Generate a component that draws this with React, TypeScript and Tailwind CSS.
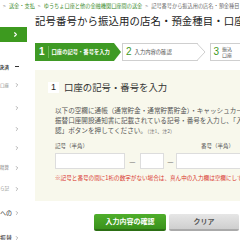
import { ChevronRight } from 'lucide-react';

const jp = { fontFamily: '"Noto Sans CJK JP", "Noto Sans", sans-serif' };

const sideItems = [
  { label: '口座', h: 'h-[24px]', dark: false },
  { label: '', h: 'h-[22px]', dark: false },
  { label: '', h: 'h-[19px]', dark: false },
  { label: '', h: 'h-[20px]', dark: false },
  { label: '精算', h: 'h-[19px]', dark: false },
  { label: 'ら記', h: 'h-[23px]', dark: false },
  { label: 'への', h: 'h-[26px]', dark: true },
  { label: '振替', h: 'h-[24px]', dark: true },
];

function Sidebar() {
  return (
    <div className="w-[27px] shrink-0 overflow-hidden">
      <div className="h-[15px]" />
      <div className="h-[15px] bg-[#3d9a1f] flex items-center justify-end pr-[8px]">
        <ChevronRight className="w-[7px] h-[7px] text-white" strokeWidth={4} />
      </div>
      <div className="h-[17px]" />
      <div className="h-[14px] flex items-center justify-between pr-[8px]">
        <span className="text-[5px] text-[#333] font-bold leading-none -ml-[1px]">決済</span>
        <span className="w-[4px] h-[1px] bg-[#333]" />
      </div>
      {sideItems.map((it, i) => (
        <div key={i} className={`${it.h} flex items-center justify-between pr-[7px]`}>
          <span className={`leading-none ${it.dark ? 'text-[6px] text-[#222]' : 'text-[4.5px] text-[#888]'}`}>{it.label}</span>
          <ChevronRight className="w-[6px] h-[6px] text-[#999]" strokeWidth={3} />
        </div>
      ))}
    </div>
  );
}

function Steps() {
  return (
    <div className="flex items-center h-[18px] mt-[17px]">
      <div className="relative h-[18px] w-[87px] bg-[#3f9a25] flex items-center">
        <span className="text-white text-[10px] font-bold pl-[4px] pr-[3px] leading-none border-r border-[#6cb555] h-[12px] flex items-center" style={{ fontFamily: 'Arial, "Liberation Sans", sans-serif' }}>1</span>
        <span className="text-white text-[5.3px] font-bold pl-[3px] leading-none whitespace-nowrap">口座の記号・番号を入力</span>
        <div className="absolute -right-[7px] top-0 w-0 h-0 border-y-[9px] border-y-transparent border-l-[7px] border-l-[#3f9a25]" />
      </div>
      <div className="relative h-[18px] w-[84px] ml-[8px] bg-white border border-[#cfcfcf] border-r-0 flex items-center">
        <span className="text-[#3f9a25] text-[10px] pl-[3px] pr-[3px] leading-none" style={{ fontFamily: 'Arial, "Liberation Sans", sans-serif' }}>2</span>
        <span className="text-[#555] text-[5.3px] leading-none whitespace-nowrap">入力内容の確認</span>
        <svg className="absolute -right-[8px] -top-[1px]" width="9" height="18" viewBox="0 0 9 18">
          <path d="M0 0.5 L8 9 L0 17.5" fill="white" stroke="#cfcfcf" strokeWidth="1" />
        </svg>
      </div>
      <div className="h-[18px] w-[40px] ml-[12px] bg-white border border-[#cfcfcf] flex items-center">
        <span className="text-[#3f9a25] text-[10px] pl-[2px] pr-[3px] leading-none" style={{ fontFamily: 'Arial, "Liberation Sans", sans-serif' }}>3</span>
        <span className="text-[#555] text-[5px] leading-[6px]">振込<br />口座</span>
      </div>
    </div>
  );
}

export default function App() {
  return (
    <div className="w-[240px] h-[240px] overflow-hidden bg-white" style={jp}>
      <div className="h-[12px] flex items-center whitespace-nowrap text-[5.2px] leading-none pl-[3px] overflow-hidden">
        <span className="text-[#888]">&gt;</span>
        <span className="text-[#3a8a2a] ml-[3px]">送金・支払</span>
        <span className="text-[#888] mx-[3px]">&gt;</span>
        <span className="text-[#3a8a2a]">ゆうちょ口座と他の金融機関口座間の送金</span>
        <span className="text-[#888] mx-[3px]">&gt;</span>
        <span className="text-[#666]">記号番号から振込用の店名・預金種目・口座番号を確認</span>
      </div>
      <div className="flex">
        <Sidebar />
        <div className="w-[220px] shrink-0 pl-[8px] overflow-hidden">
          <h1 className="text-[10.4px] leading-none text-[#222] whitespace-nowrap mt-[4px] tracking-[0.1px]">記号番号から振込用の店名・預金種目・口座番号を確認</h1>
          <Steps />
          <div className="mt-[9px] w-[220px] h-[131px] bg-[#f8f8ec] pl-[13px] pt-[12px]">
            <div className="flex items-center">
              <span className="w-[11px] h-[11px] bg-white flex items-center justify-center text-[9px] text-[#222] leading-none" style={{ fontFamily: 'Arial, "Liberation Sans", sans-serif' }}>1</span>
              <span className="ml-[5px] text-[9.4px] text-[#333] leading-none whitespace-nowrap">口座の記号・番号を入力</span>
            </div>
            <div className="mt-[12px] pl-[7px] text-[6.6px] leading-[10px] text-[#555] whitespace-nowrap">
              <p>以下の空欄に通帳（通常貯金・通常貯蓄貯金）・キャッシュカード</p>
              <p>振替口座開設通知書に記載されている記号・番号を入力し、「入力</p>
              <p>認」ボタンを押してください。<span className="text-[5px] text-[#777]">（注1、注2）</span></p>
            </div>
            <div className="mt-[8px] pl-[7px] flex text-[5.5px] text-[#555] leading-none">
              <span>記号（半角）</span>
              <span className="ml-[113px]">番号（半角）</span>
            </div>
            <div className="mt-[3px] pl-[7px] flex items-center h-[16px]">
              <div className="w-[71px] h-[16px] bg-white border border-[#ddd]" />
              <span className="w-[15px] text-center text-[#555] text-[7px]">—</span>
              <div className="w-[25px] h-[16px] bg-white border border-[#ddd]" />
              <span className="w-[12px] text-center text-[#555] text-[7px]">—</span>
              <div className="w-[80px] h-[16px] bg-white border border-[#ddd]" />
            </div>
            <p className="mt-[7px] pl-[7px] text-[5.6px] text-[#d9342b] leading-none whitespace-nowrap">※記号と番号の間に1桁の数字がない場合は、真ん中の入力欄は空欄にしてください。</p>
          </div>
          <div className="mt-[13px] flex">
            <div className="ml-[59px] w-[72px] h-[17px] rounded-[2px] bg-gradient-to-b from-[#4fae2b] to-[#3a921c] border-b-[2px] border-[#2c6f14] flex items-center justify-center">
              <span className="text-white text-[7px] font-bold leading-none">入力内容の確認</span>
            </div>
            <div className="ml-[3px] w-[70px] h-[17px] rounded-[2px] bg-gradient-to-b from-[#e6e6e6] to-[#cfcfcf] border-b-[2px] border-[#aaa] flex items-center justify-center">
              <span className="text-[#555] text-[7px] font-bold leading-none">クリア</span>
            </div>
          </div>
        </div>
      </div>
    </div>
  );
}
